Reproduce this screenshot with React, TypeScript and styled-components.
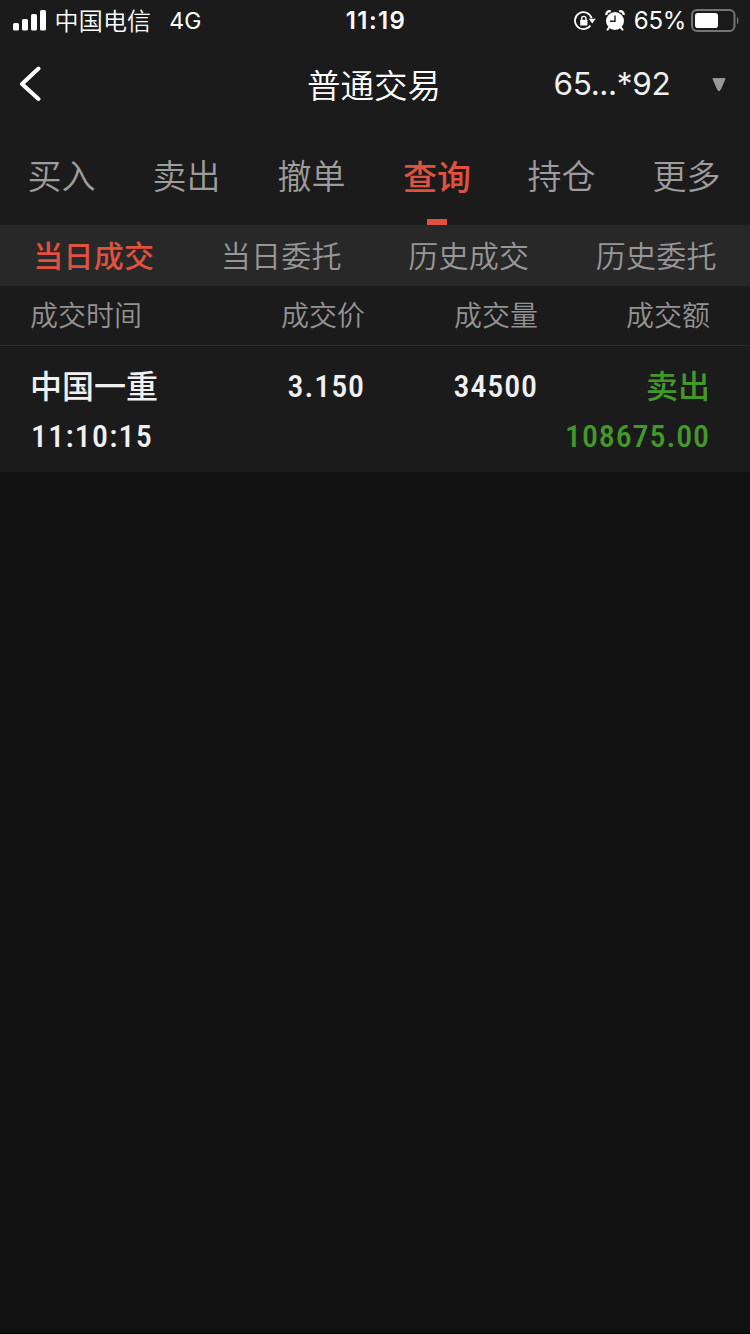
import React from "react";
import styled, { createGlobalStyle } from "styled-components";

const GlobalStyle = createGlobalStyle`
  * { box-sizing: border-box; }
  html, body { margin: 0; background: #111111; }
  body { font-family: Inter, "Noto Sans CJK SC", sans-serif; color: #fff; overflow: hidden; }
`;

const Screen = styled.div`
  width: 750px;
  height: 1334px;
  background: #111111;
  border-bottom: 1px solid #000;
  font-weight: 370;
`;

const StatusBar = styled.header`
  display: grid;
  grid-template-columns: 1fr 60px 1fr;
  align-items: center;
  height: 40px;
  padding: 0 11px 0 13px;
  background: #1b1b1b;
  font-size: 24px;
  line-height: 40px;
`;

const StatusSide = styled.div<{ $end?: boolean }>`
  display: flex;
  align-items: center;
  justify-content: ${(p) => (p.$end ? "flex-end" : "flex-start")};
  height: 40px;
  svg { flex: none; }
`;

const Carrier = styled.span`
  margin: -2px 0 0 7.5px;
  font-family: "Noto Sans CJK SC", sans-serif;
  font-weight: 350;
  letter-spacing: 0.2px;
`;

const Network = styled.span`
  margin-left: 18px;
  font-size: 23px;
  padding-top: 1px;
`;

const Clock = styled.span`
  display: flex;
  justify-content: center;
  font-size: 24px;
  font-weight: 570;
  letter-spacing: 1.4px;
  white-space: nowrap;
  padding-top: 1px;
`;

const Percent = styled.span`
  margin: 0 5px 0 9px;
  font-size: 24px;
  letter-spacing: -0.3px;
  padding-top: 1px;
`;

const StatusIcons = styled.div`
  display: flex;
  align-items: center;
  gap: 9px;
`;

const TitleBar = styled.div`
  display: grid;
  grid-template-columns: 250px 248px 1fr;
  align-items: center;
  height: 88px;
  padding: 0 23px 0 0;
  background: #1b1b1b;
`;

const BackButton = styled.button`
  display: flex;
  align-items: center;
  height: 88px;
  padding: 0 0 0 18px;
  border: 0;
  background: none;
`;

const Title = styled.h1`
  margin: 0;
  font: 350 33.5px/87px "Noto Sans CJK SC", sans-serif;
  height: 88px;
  text-align: center;
`;

const AccountPicker = styled.div`
  display: flex;
  align-items: center;
  justify-content: space-between;
  height: 88px;
  padding-left: 55.5px;
  color: #f0f0f0;
  font-size: 31.5px;
  line-height: 90px;
  letter-spacing: -0.35px;
`;

const Tabs = styled.nav`
  display: grid;
  grid-template-columns: repeat(6, 125px);
  height: 97px;
  background: #1b1b1b;
`;

const Tab = styled.div<{ $active?: boolean }>`
  display: flex;
  flex-direction: column;
  align-items: center;
  justify-content: space-between;
  padding-right: ${(p) => (p.$active ? 1 : 2)}px;
  font: ${(p) => (p.$active ? 500 : 350)} 34px/${(p) => (p.$active ? 96 : 94)}px "Noto Sans CJK SC", sans-serif;
  color: ${(p) => (p.$active ? "#e05140" : "#9d9d9d")};
  &::after {
    content: "";
    flex: none;
    width: 20px;
    height: 6px;
    background: ${(p) => (p.$active ? "#e05140" : "transparent")};
    margin-top: -6px;
  }
`;

const SubTabs = styled.nav`
  display: grid;
  grid-template-columns: repeat(4, 1fr);
  height: 61px;
  background: #282828;
`;

const SubTab = styled.div<{ $active?: boolean }>`
  text-align: center;
  letter-spacing: 0.3px;
  font: ${(p) => (p.$active ? 500 : 350)} 30px/59px "Noto Sans CJK SC", sans-serif;
  color: ${(p) => (p.$active ? "#e05140" : "#979797")};
`;

const Columns = styled.div`
  display: grid;
  grid-template-columns: 162px 173px 173px 172px;
  padding: 0 40px 0 30px;
  background: #1b1b1b;
`;

const HeadRow = styled(Columns)`
  height: 60px;
  border-bottom: 1px solid #2a2a2a;
  font: 350 28px/57px "Noto Sans CJK SC", sans-serif;
  color: #939393;
`;

const TradeRow = styled(Columns)`
  height: 126px;
  padding-top: 15px;
  grid-auto-rows: 50px;
  font-size: 32px;
  line-height: 50px;
  color: #f0f0f0;
`;

const Cell = styled.span<{ $start?: boolean }>`
  text-align: ${(p) => (p.$start ? "left" : "right")};
  white-space: nowrap;
`;

const NameCell = styled(Cell)<{ $sell?: boolean }>`
  font-family: "Noto Sans CJK SC", sans-serif;
  font-weight: 500;
  line-height: 47px;
  color: ${(p) => (p.$sell ? "#43982a" : "inherit")};
`;

const NumberCell = styled(Cell)<{ $sell?: boolean; $lower?: boolean }>`
  grid-column: ${(p) => (p.$lower ? (p.$start ? "1 / 3" : "3 / 5") : "auto")};
  padding-left: 1px;
  font-family: Roboto, sans-serif;
  font-weight: 460;
  font-stretch: 85%;
  letter-spacing: ${(p) => (p.$start ? "1.2px" : "0.9px")};
  color: ${(p) => (p.$sell ? "#43982a" : "inherit")};
`;

const SignalIcon = () => (
  <svg width="34" height="22" viewBox="0 0 34 22" fill="#fff">
    <rect x="0" y="13" width="6" height="7.5" rx="1.6" />
    <rect x="9" y="9" width="6" height="11.5" rx="1.6" />
    <rect x="18" y="4" width="6" height="16.5" rx="1.6" />
    <rect x="27" y="0" width="6" height="20.5" rx="1.6" />
  </svg>
);

const RotationLockIcon = () => (
  <svg width="22" height="20" viewBox="0 0 22 20" fill="none" stroke="#fff">
    <path d="M17.6 7.2A8.5 8.5 0 1 0 16.4 14.6" strokeWidth="1.8" />
    <path d="M14.8 7.8H21.6L18.3 12.6Z" fill="#fff" stroke="none" />
    <rect x="6.2" y="8.7" width="7.2" height="5.8" rx="0.6" fill="#fff" stroke="none" />
    <path d="M7.6 9V7.5a2.2 2.2 0 0 1 4.4 0V9" strokeWidth="1.3" />
  </svg>
);

const AlarmIcon = () => (
  <svg width="20" height="21" viewBox="0 0 20 21" fill="none">
    <circle cx="10" cy="11" r="9" fill="#fff" />
    <path d="M1.5 5A3.1 3.1 0 0 1 5.8 1.5M18.5 5A3.1 3.1 0 0 0 14.2 1.5" stroke="#fff" strokeWidth="2.4" />
    <path d="M4.5 17.2L2.5 19.6M15.5 17.2L17.5 19.6" stroke="#fff" strokeWidth="2" strokeLinecap="round" />
    <path d="M10 5.5V11.3H5" stroke="#1b1b1b" strokeWidth="1.4" />
  </svg>
);

const BatteryIcon = () => (
  <svg width="48" height="24" viewBox="0 0 48 24" fill="none">
    <rect x="1" y="1" width="42.5" height="21" rx="5" stroke="#757575" strokeWidth="2" />
    <rect x="4" y="4" width="23" height="15" rx="2.8" fill="#fff" />
    <path d="M46 7.5Q49 11.5 46 15.5Z" fill="#757575" />
  </svg>
);

const BackIcon = () => (
  <svg width="24" height="36" viewBox="0 0 24 36" fill="none">
    <path d="M20.5 2.5L4 18L20.5 33" stroke="#fff" strokeWidth="4" strokeLinecap="round" strokeLinejoin="round" />
  </svg>
);

const CaretIcon = () => (
  <svg width="16" height="16" viewBox="0 0 16 16">
    <path d="M1.9 2.6H14.1L9.4 13.6Q8 16 6.6 13.6Z" fill="#999" stroke="#999" strokeLinejoin="round" />
  </svg>
);

const tabs = ["买入", "卖出", "撤单", "查询", "持仓", "更多"];
const subTabs = ["当日成交", "当日委托", "历史成交", "历史委托"];
const headings = ["成交时间", "成交价", "成交量", "成交额"];

export default function App() {
  return (
    <>
      <GlobalStyle />
      <Screen>
        <StatusBar>
          <StatusSide>
            <SignalIcon />
            <Carrier>中国电信</Carrier>
            <Network>4G</Network>
          </StatusSide>
          <Clock>11:19</Clock>
          <StatusSide $end>
            <StatusIcons>
              <RotationLockIcon />
              <AlarmIcon />
            </StatusIcons>
            <Percent>65%</Percent>
            <BatteryIcon />
          </StatusSide>
        </StatusBar>
        <TitleBar>
          <BackButton aria-label="返回"><BackIcon /></BackButton>
          <Title>普通交易</Title>
          <AccountPicker>
            <span>65...*92</span>
            <CaretIcon />
          </AccountPicker>
        </TitleBar>
        <Tabs>
          {tabs.map((t) => <Tab key={t} $active={t === "查询"}>{t}</Tab>)}
        </Tabs>
        <SubTabs>
          {subTabs.map((t) => <SubTab key={t} $active={t === "当日成交"}>{t}</SubTab>)}
        </SubTabs>
        <HeadRow>
          {headings.map((h, i) => <Cell key={h} $start={i === 0}>{h}</Cell>)}
        </HeadRow>
        <TradeRow>
          <NameCell $start>中国一重</NameCell>
          <NumberCell>3.150</NumberCell>
          <NumberCell>34500</NumberCell>
          <NameCell $sell>卖出</NameCell>
          <NumberCell $start $lower>11:10:15</NumberCell>
          <NumberCell $sell $lower>108675.00</NumberCell>
        </TradeRow>
      </Screen>
    </>
  );
}
